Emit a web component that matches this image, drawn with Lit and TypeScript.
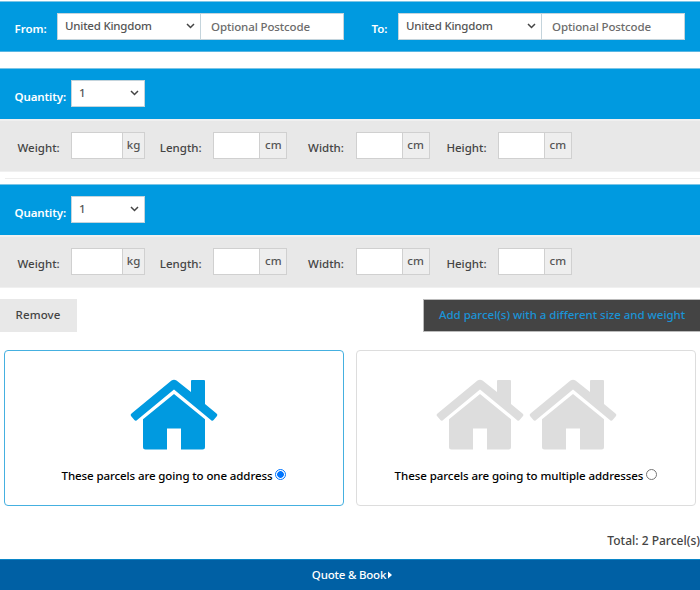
import { LitElement, html, css } from "lit";
import { customElement, property, state } from "lit/decorators.js";
import { classMap } from "lit/directives/class-map.js";

const FONT = css`"Noto Sans", "Open Sans", sans-serif`;

@customElement("house-icon")
export class HouseIcon extends LitElement {
  static styles = css`
    :host { display: block; width: 88px; height: 72px; }
    svg { display: block; fill: currentColor; }
  `;
  render() {
    return html`<svg width="88" height="72" viewBox="0 0 88 72">
      <path d="M41.5 1.5Q44 0 46.5 1.5L61 13V2Q61 1 62 1H74Q75 1 75 2V25L86.5 34.5Q88 35.8 87 37L83.6 41Q82.5 42.3 81.2 41.2L44 10.5L6.8 41.2Q5.5 42.3 4.4 41L1 37Q0 35.8 1.5 34.5Z"/>
      <path d="M44 15L75 40.2V68Q75 70.5 72.5 70.5H51V49.5H37V70.5H15.5Q13 70.5 13 68V40.2Z"/>
    </svg>`;
  }
}

@customElement("select-box")
export class SelectBox extends LitElement {
  @property() value = "";
  static styles = css`
    :host { display: flex; align-items: center; justify-content: space-between; box-sizing: border-box;
      background: #fff; height: 27px; padding: 0 5px 1px 7px; border: 1px solid #c4d4dc;
      font: 500 11.5px/16px ${FONT}; color: #555; }
    svg { display: block; }
    .text { letter-spacing: var(--track, 0); white-space: nowrap; }
  `;
  render() {
    return html`<span class="text">${this.value}</span>
      <svg width="9" height="6" viewBox="0 0 9 6" fill="none" stroke="#444" stroke-width="1.5"><path d="M1 1L4.5 4.5L8 1"/></svg>`;
  }
}

@customElement("address-field")
export class AddressField extends LitElement {
  @property() label = "";
  static styles = css`
    :host { display: flex; align-items: center; font: 500 11.5px/16px ${FONT}; }
    .label { color: #fff; font-weight: 600; box-sizing: border-box; width: var(--label-width); padding: 6px 0 0 0.5px; }
    select-box { width: 144px; --track: -0.22px; }
    input { box-sizing: border-box; width: 144px; height: 27px; margin: 0 0 0 -1px; padding: 1px 10px 0; border: 1px solid #c4d4dc;
      border-radius: 0; background: #fff; font: inherit; letter-spacing: -0.12px; outline: none; }
    input::placeholder { color: #6c6c6c; opacity: 1; }
  `;
  render() {
    return html`<span class="label">${this.label}:</span>
      <select-box value="United Kingdom"></select-box><input placeholder="Optional Postcode" />`;
  }
}

const MEASURES = [
  { label: "Weight", unit: "kg", key: "weight" },
  { label: "Length", unit: "cm", key: "length" },
  { label: "Width", unit: "cm", key: "width" },
  { label: "Height", unit: "cm", key: "height" },
];

@customElement("parcel-row")
export class ParcelRow extends LitElement {
  static styles = css`
    :host { display: block; font: 500 11.5px/16px ${FONT}; }
    .quantity { display: flex; height: 51px; box-sizing: border-box; background: #009ae0; border-top: 1px solid #7cc5e6; }
    .quantity .label { box-sizing: border-box; flex: none; width: 71px; padding: 20px 0 0 14.5px; color: #fff; font-weight: 600;
      letter-spacing: -0.1px; white-space: nowrap; }
    .quantity select-box { width: 74px; margin-top: 11px; }
    .measures { display: flex; height: 53px; box-sizing: border-box; background: #e8e8e8; border-top: 2px solid #f0f0f0; border-bottom: 1px solid #f0f0f0; }
    .cell { display: flex; flex: none; width: 142.3px; color: #444; }
    .cell .label { box-sizing: border-box; flex: none; width: 71px; padding: 19px 0 0 17.5px; white-space: nowrap; }
    .cell.width .label { padding-left: 23.5px; }
    .cell.height .label { padding-left: 19.5px; }
    .group { display: flex; flex: none; box-sizing: border-box; width: 74px; height: 27px; margin-top: 11px; border: 1px solid #d0d0d0; }
    input { box-sizing: border-box; width: 46px; min-width: 0; padding: 0; border: 0; border-right: 1px solid #d0d0d0; border-radius: 0; background: #fff; outline: none; }
    .weight input { width: 51px; }
    .unit { flex: 1; text-align: center; background: #eee; color: #555; line-height: 23px; }
  `;
  render() {
    return html`<div class="quantity"><span class="label">Quantity:</span><select-box value="1"></select-box></div>
      <div class="measures">${MEASURES.map((m) => html`<div class="cell ${m.key}">
        <span class="label">${m.label}:</span>
        <div class="group"><input aria-label=${m.label} /><span class="unit">${m.unit}</span></div>
      </div>`)}</div>`;
  }
}

@customElement("app-root")
export class AppRoot extends LitElement {
  @state() private multiple = false;

  static styles = css`
    :host { display: flex; flex-direction: column; height: 590px; overflow: hidden; background: #fff; font: 500 11.5px/16px ${FONT}; color: #444; }
    .route { display: flex; height: 51px; box-sizing: border-box; margin: 1px 0 16px; padding: 11px 0 12px 14px;
      background: #009ae0; border-top: 1px solid #7cc5e6; border-bottom: 1px solid #58b6e3; gap: 27px; }
    .from { --label-width: 43px; }
    .to { --label-width: 27px; }
    .divider { height: 1px; margin: 6px 0 5px 5px; background: #eee; }
    .actions { display: flex; justify-content: space-between; height: 33px; margin-top: 11px; }
    button { border: 1px solid #e8e8e8; background: #e8e8e8; font: inherit; color: #444; padding: 0 15px 2px; white-space: nowrap; }
    .remove { width: 77px; padding: 0 15px 2px 14px; letter-spacing: 0.1px; }
    .add { width: 277px; background: #444; border-color: #bbb; border-right: 0; color: #1a93d6; letter-spacing: -0.02px; }
    .options { display: flex; gap: 12px; padding: 18px 0 0 4px; }
    .card { display: flex; flex-direction: column; align-items: center; box-sizing: border-box; width: 340px; height: 156px;
      padding-top: 28px; border: 1px solid #ddd; border-radius: 4px; color: #ddd; }
    .card.selected { border-color: #45b0e0; color: #009ae0; }
    .houses { display: flex; gap: 5px; height: 72px; }
    .choice { display: flex; align-items: center; gap: 3px; margin-top: 17px; color: #000; white-space: nowrap; }
    .one { letter-spacing: -0.1px; }
    .many { letter-spacing: -0.06px; }
    .radio { box-sizing: border-box; width: 11px; height: 11px; margin-bottom: 3px; border: 1px solid #767676; border-radius: 50%; }
    .selected .radio { border-color: #0075ff; background: radial-gradient(circle, #0075ff 3px, #fff 3.7px); }
    .total { margin-top: 27px; text-align: right; white-space: nowrap; font-size: 12px; }
    .book { display: flex; align-items: center; justify-content: center; gap: 2px; box-sizing: border-box; width: 100%; height: 31px; margin-top: auto;
      background: #0060a4; border: 0; border-top: 1px solid #0b86c8; color: #fff; padding: 0 0 0 4px; letter-spacing: -0.2px; }
  `;

  private card(multiple: boolean, label: string) {
    const selected = this.multiple === multiple;
    return html`<div class=${classMap({ card: true, selected })} @click=${() => (this.multiple = multiple)}>
      <div class="houses"><house-icon></house-icon>${multiple ? html`<house-icon></house-icon>` : ""}</div>
      <div class="choice"><span class=${multiple ? "many" : "one"}>${label}</span><span class="radio"></span></div>
    </div>`;
  }

  render() {
    return html`
      <div class="route">
        <address-field class="from" label="From"></address-field>
        <address-field class="to" label="To"></address-field>
      </div>
      <parcel-row></parcel-row>
      <div class="divider"></div>
      <parcel-row></parcel-row>
      <div class="actions">
        <button class="remove">Remove</button>
        <button class="add">Add parcel(s) with a different size and weight</button>
      </div>
      <div class="options">
        ${this.card(false, "These parcels are going to one address")}
        ${this.card(true, "These parcels are going to multiple addresses")}
      </div>
      <div class="total">Total: 2 Parcel(s)</div>
      <button class="book"><span>Quote &amp; Book</span>
        <svg width="4" height="8" viewBox="0 0 4 8" fill="currentColor"><path d="M0 0.5L4 4L0 7.5Z"/></svg></button>`;
  }
}
